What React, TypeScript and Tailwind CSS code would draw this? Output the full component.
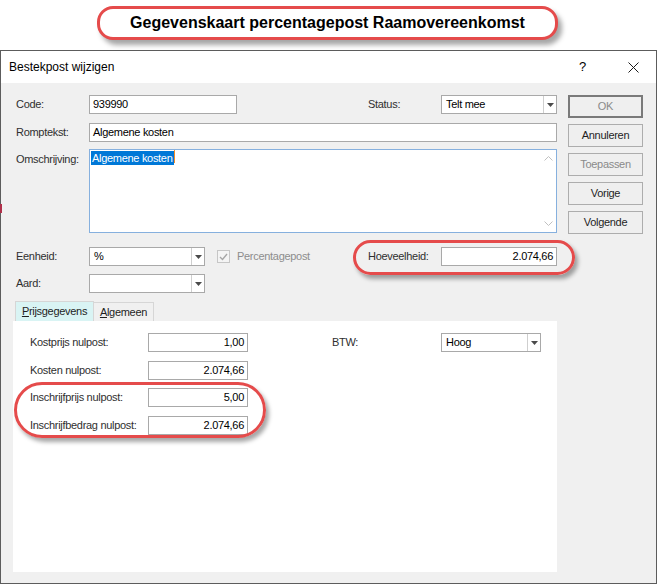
import React from 'react';

const ui = "font-['Liberation_Sans',Arial,sans-serif] text-[11px]";

function Arrow() {
  return (
    <svg width="7" height="4" viewBox="0 0 7 4" className="block">
      <path d="M0 0h7L3.5 4z" fill="#4a4a4a" />
    </svg>
  );
}

function TextBox({ w, value, right }: { w: string; value?: string; right?: boolean }) {
  return (
    <div
      className={`${w} h-[19px] border border-[#a9a9a9] bg-white px-[3px] flex items-center text-black ${
        right ? 'justify-end' : ''
      }`}
    >
      {value}
    </div>
  );
}

function Combo({ w, value }: { w: string; value?: string }) {
  return (
    <div className={`${w} h-[19px] border border-[#a9a9a9] bg-white flex text-black`}>
      <div className="flex-1 flex items-center px-[4px]">{value}</div>
      <div className="w-[13px] border-l border-[#cfcfcf] flex items-center justify-center">
        <Arrow />
      </div>
    </div>
  );
}

function Btn({ label, dim, main }: { label: string; dim?: boolean; main?: boolean }) {
  return (
    <div
      className={`w-[75px] h-[23px] flex items-center justify-center bg-[#efefef] ${
        main ? 'border-2 border-[#7a7a7a]' : 'border border-[#adadad]'
      } ${dim ? 'text-[#8a8a8a]' : 'text-[#1e1e1e]'}`}
    >
      {label}
    </div>
  );
}

function Oval({ className }: { className: string }) {
  return (
    <div
      className={`absolute rounded-full border-[3px] border-[#e54b4b] shadow-[3px_4px_4px_rgba(0,0,0,0.35)] pointer-events-none ${className}`}
    />
  );
}

export default function App() {
  const panelRows = [
    ['Kostprijs nulpost:', '1,00'],
    ['Kosten nulpost:', '2.074,66'],
    ['Inschrijfprijs nulpost:', '5,00'],
    ['Inschrijfbedrag nulpost:', '2.074,66'],
  ];

  return (
    <div className={`relative w-[657px] h-[584px] bg-white overflow-hidden ${ui}`}>
      {/* callout header */}
      <div className="h-[50px] flex pt-[6px] pl-[97px]">
        <div className="w-[461px] h-[34px] rounded-[16px] border-[3px] border-[#e54b4b] bg-white shadow-[4px_5px_5px_rgba(0,0,0,0.35)] flex items-center justify-center font-['Liberation_Sans',Arial,sans-serif] font-bold text-[16px] text-black">
          Gegevenskaart percentagepost Raamovereenkomst
        </div>
      </div>

      {/* dialog */}
      <div className="h-[534px] border border-[#5c5c5c] flex flex-col tracking-[-0.3px]">
        <div className="h-[32px] bg-white flex items-center pl-[8px] text-[12px] text-black tracking-normal">
          <span className="flex-1">Bestekpost wijzigen</span>
          <span className="w-[12px] mr-[37px] text-[13px]">?</span>
          <svg width="11" height="11" viewBox="0 0 11 11" className="mr-[17px]">
            <path d="M0.5 0.5l10 10M10.5 0.5l-10 10" stroke="#1a1a1a" strokeWidth="1" />
          </svg>
        </div>

        <div className="flex-1 bg-[#f0f0f0] flex text-[#2f2f2f]">
          {/* left part */}
          <div className="w-[567px] flex flex-col pt-[12px]">
            <div className="flex items-center pl-[15px]">
              <span className="w-[73px]">Code:</span>
              <TextBox w="w-[148px]" value="939990" />
              <span className="ml-[131px] w-[73px]">Status:</span>
              <Combo w="w-[116px]" value="Telt mee" />
            </div>

            <div className="flex items-center pl-[15px] mt-[9px]">
              <span className="w-[73px]">Romptekst:</span>
              <TextBox w="w-[468px]" value="Algemene kosten" />
            </div>

            <div className="flex pl-[15px] mt-[7px]">
              <span className="w-[73px] pt-[2px]">Omschrijving:</span>
              <div className="w-[468px] h-[84px] border border-[#86b0de] bg-white flex">
                <div className="flex-1 pl-[1px] pt-[0px]">
                  <span className="bg-[#0078d7] text-white px-[1px] leading-[14px] inline-block">Algemene kosten</span>
                  <span className="inline-block w-[1px] h-[13px] bg-[#f28c28] align-top" />
                </div>
                <div className="w-[16px] flex flex-col justify-between items-center py-[5px]">
                  <svg width="9" height="6" viewBox="0 0 9 6">
                    <path d="M0.5 5.5l4-4 4 4" stroke="#c0c0c0" fill="none" />
                  </svg>
                  <svg width="9" height="6" viewBox="0 0 9 6">
                    <path d="M0.5 0.5l4 4 4-4" stroke="#c0c0c0" fill="none" />
                  </svg>
                </div>
              </div>
            </div>

            <div className="flex items-center pl-[15px] mt-[14px]">
              <span className="w-[73px]">Eenheid:</span>
              <Combo w="w-[116px]" value="%" />
              <div className="ml-[12px] w-[13px] h-[13px] border border-[#c6c6c6] bg-[#f4f4f4] flex items-center justify-center">
                <svg width="9" height="8" viewBox="0 0 9 8">
                  <path d="M1 4l2.5 2.5L8 1" stroke="#a6a6a6" strokeWidth="1.4" fill="none" />
                </svg>
              </div>
              <span className="ml-[7px] w-[131px] text-[#8d8d8d]">Percentagepost</span>
              <span className="w-[73px]">Hoeveelheid:</span>
              <TextBox w="w-[116px]" value="2.074,66" right />
            </div>

            <div className="flex items-center pl-[15px] mt-[8px]">
              <span className="w-[73px]">Aard:</span>
              <Combo w="w-[116px]" />
            </div>

            {/* tabs */}
            <div className="flex items-end pl-[14px] mt-[8px] h-[20px]">
              <div className="w-[79px] h-[20px] border border-b-0 border-[#d6d6d6] bg-[#d9f4f4] flex items-center justify-center text-[#1e1e1e]">
                <span><u>P</u>rijsgegevens</span>
              </div>
              <div className="w-[60px] h-[19px] border border-l-0 border-b-0 border-[#d6d6d6] flex items-center justify-center text-[#1e1e1e]">
                <span><u>A</u>lgemeen</span>
              </div>
            </div>
            <div className="ml-[12px] w-[544px] h-[251px] bg-white pt-[12px]">
              <div className="flex">
                <div className="flex flex-col pl-[17px]">
                  {panelRows.map(([label, value], i) => (
                    <div key={label} className={`flex items-center ${i === 0 ? '' : i === 2 ? 'mt-[8px]' : 'mt-[9px]'}`}>
                      <span className="w-[118px]">{label}</span>
                      <TextBox w="w-[100px]" value={value} right />
                    </div>
                  ))}
                </div>
                <div className="flex items-start pl-[84px]">
                  <div className="flex items-center">
                    <span className="w-[109px]">BTW:</span>
                    <Combo w="w-[100px]" value="Hoog" />
                  </div>
                </div>
              </div>
            </div>
          </div>

          {/* buttons */}
          <div className="flex flex-col gap-[6px] pt-[12px]">
            <Btn label="OK" main dim />
            <Btn label="Annuleren" />
            <Btn label="Toepassen" dim />
            <Btn label="Vorige" />
            <Btn label="Volgende" />
          </div>
        </div>
      </div>

      <div className="absolute left-0 top-[204px] w-[2px] h-[9px] bg-[#b0304a]" />
      <Oval className="left-[353px] top-[240px] w-[222px] h-[35px]" />
      <Oval className="left-[14px] top-[382px] w-[252px] h-[56px] rounded-[26px]" />
    </div>
  );
}
